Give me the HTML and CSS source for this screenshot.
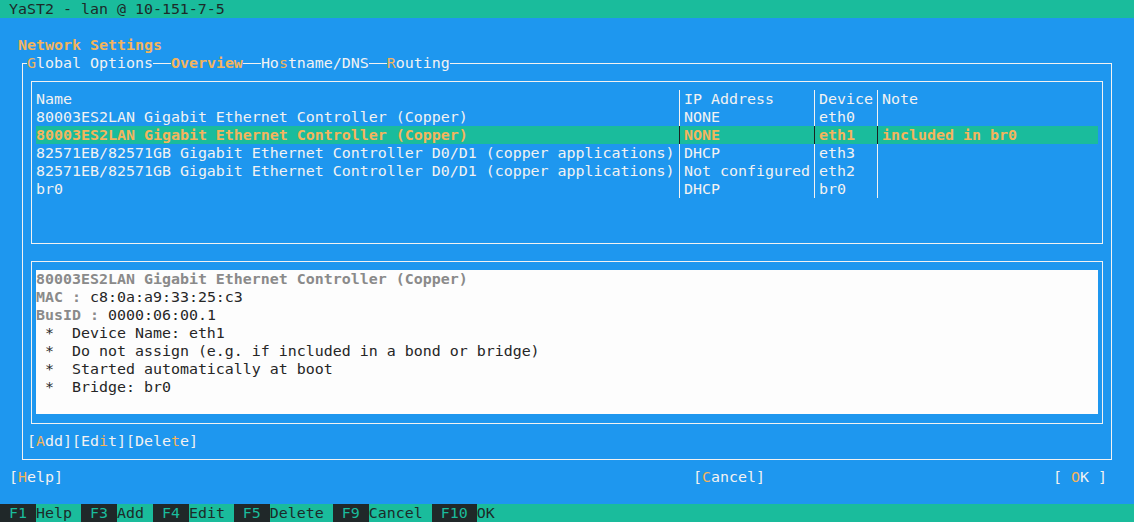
FILE: index.html
```html
<!DOCTYPE html>
<html lang="en">
<head>
<meta charset="utf-8">
<title>YaST2 - lan @ 10-151-7-5</title>
<link rel="stylesheet" href="styles.css">
</head>
<body>
<div class="term">
  <div class="titlebar">YaST2 - lan @ 10-151-7-5</div>
  <div class="screen">
    <div class="heading">Network Settings</div>
    <div class="frame">
      <div class="tabs">
        <span class="tab"><span class="hk">G</span>lobal Options</span>
        <span class="tab active">Overview</span>
        <span class="tab">Ho<span class="hk">s</span>tname/DNS</span>
        <span class="tab"><span class="hk">R</span>outing</span>
      </div>
      <div class="table">
        <div class="row">
          <span class="c-name">Name</span><span class="sep"></span><span class="c-ip">IP Address</span><span class="sep"></span><span class="c-dev">Device</span><span class="sep"></span><span class="c-note">Note</span>
        </div>
        <div class="row">
          <span class="c-name">80003ES2LAN Gigabit Ethernet Controller (Copper)</span><span class="sep"></span><span class="c-ip">NONE</span><span class="sep"></span><span class="c-dev">eth0</span><span class="sep"></span><span class="c-note"></span>
        </div>
        <div class="row selected">
          <span class="c-name">80003ES2LAN Gigabit Ethernet Controller (Copper)</span><span class="sep"></span><span class="c-ip">NONE</span><span class="sep"></span><span class="c-dev">eth1</span><span class="sep"></span><span class="c-note">included in br0</span>
        </div>
        <div class="row">
          <span class="c-name">82571EB/82571GB Gigabit Ethernet Controller D0/D1 (copper applications)</span><span class="sep"></span><span class="c-ip">DHCP</span><span class="sep"></span><span class="c-dev">eth3</span><span class="sep"></span><span class="c-note"></span>
        </div>
        <div class="row">
          <span class="c-name">82571EB/82571GB Gigabit Ethernet Controller D0/D1 (copper applications)</span><span class="sep"></span><span class="c-ip">Not configured</span><span class="sep"></span><span class="c-dev">eth2</span><span class="sep"></span><span class="c-note"></span>
        </div>
        <div class="row">
          <span class="c-name">br0</span><span class="sep"></span><span class="c-ip">DHCP</span><span class="sep"></span><span class="c-dev">br0</span><span class="sep"></span><span class="c-note"></span>
        </div>
      </div>
      <div class="info">
        <div class="info-body">
          <div class="line"><span class="muted">80003ES2LAN Gigabit Ethernet Controller (Copper)</span></div>
          <div class="line"><span class="muted">MAC : </span>c8:0a:a9:33:25:c3</div>
          <div class="line"><span class="muted">BusID : </span>0000:06:00.1</div>
          <div class="line"> *  Device Name: eth1</div>
          <div class="line"> *  Do not assign (e.g. if included in a bond or bridge)</div>
          <div class="line"> *  Started automatically at boot</div>
          <div class="line"> *  Bridge: br0</div>
        </div>
      </div>
      <div class="actions"><span class="btn">[<span class="hk">A</span>dd]</span><span class="btn">[Ed<span class="hk">i</span>t]</span><span class="btn">[Dele<span class="hk">t</span>e]</span></div>
    </div>
    <div class="buttons">
      <span class="btn btn-help">[<span class="hk">H</span>elp]</span>
      <span class="btn btn-cancel">[<span class="hk">C</span>ancel]</span>
      <span class="btn btn-ok">[ <span class="hk">O</span>K ]</span>
    </div>
  </div>
  <div class="fkeys"><span class="key"> F1 </span><span class="label">Help </span><span class="key"> F3 </span><span class="label">Add </span><span class="key"> F4 </span><span class="label">Edit </span><span class="key"> F5 </span><span class="label">Delete </span><span class="key"> F9 </span><span class="label">Cancel </span><span class="key"> F10 </span><span class="label">OK</span></div>
</div>
</body>
</html>
```

FILE: styles.css
```css
html, body {
  margin: 0;
  padding: 0;
  background: #1e97ef;
}

.term {
  width: 1134px;
  height: 522px;
  overflow: hidden;
  font-family: "DejaVu Sans Mono", "Liberation Mono", monospace;
  font-size: 14.95px;
  line-height: 18px;
  color: #f2f2f2;
}

.titlebar {
  height: 18px;
  padding-left: 9px;
  background: #1abc9c;
  color: #1d2a29;
  white-space: pre;
}

.screen {
  height: 486px;
  box-sizing: border-box;
  padding-top: 18px;
  background: #1e97ef;
}

.heading {
  height: 18px;
  padding-left: 18px;
  color: #f4b45c;
  font-weight: bold;
}

.hk {
  color: #f4b45c;
}

.frame {
  box-sizing: border-box;
  width: 1090px;
  height: 397px;
  margin: 9px 0 0 22px;
  border: 1px solid #f2f2f2;
  padding-bottom: 9px;
  display: flex;
  flex-direction: column;
}

.tabs {
  display: flex;
  gap: 18px;
  height: 18px;
  margin: -10px 0 0 4px;
}

.tab {
  background: #1e97ef;
  white-space: pre;
}

.tab.active {
  color: #f4b45c;
  font-weight: bold;
}

.table {
  box-sizing: border-box;
  width: 1072px;
  height: 163px;
  flex: none;
  margin: 9px 0 0 8px;
  border: 1px solid #f2f2f2;
  padding: 8px 4px 0 4px;
}

.row {
  display: flex;
  height: 18px;
  white-space: pre;
}

.c-name { width: 639px; }
.c-ip { width: 126px; }
.c-dev { width: 54px; }
.c-note { width: 216px; }

.c-name, .c-ip, .c-dev, .c-note {
  overflow: hidden;
  flex: none;
}

.sep {
  width: 9px;
  flex: none;
  background: linear-gradient(to right, transparent 4px, #f2f2f2 4px, #f2f2f2 5px, transparent 5px);
}

.row.selected {
  background: #1abc9c;
  color: #f4b45c;
  font-weight: bold;
}

.row.selected .sep {
  background: linear-gradient(to right, transparent 4px, #1b2322 4px, #1b2322 5px, transparent 5px);
}

.info {
  box-sizing: border-box;
  width: 1072px;
  height: 163px;
  flex: none;
  margin: 17px 0 0 8px;
  border: 1px solid #f2f2f2;
  padding: 8px 4px 9px 4px;
}

.info-body {
  height: 144px;
  background: #fdfdfd;
  color: #262626;
}

.line {
  height: 18px;
  white-space: pre;
}

.muted {
  color: #8a8a8a;
  font-weight: bold;
}

.actions {
  display: flex;
  height: 18px;
  flex: none;
  margin: 8px 0 0 4px;
}

.btn {
  white-space: pre;
}

.buttons {
  display: flex;
  height: 18px;
  margin-top: 8px;
  padding-left: 9px;
}

.btn-cancel {
  margin-left: 630px;
}

.btn-ok {
  margin-left: 288px;
}

.fkeys {
  display: flex;
  height: 18px;
  background: #1abc9c;
}

.fkeys span {
  white-space: pre;
}

.fkeys .key {
  background: #202829;
  color: #1abc9c;
}

.fkeys .label {
  color: #1d2a29;
}
```
